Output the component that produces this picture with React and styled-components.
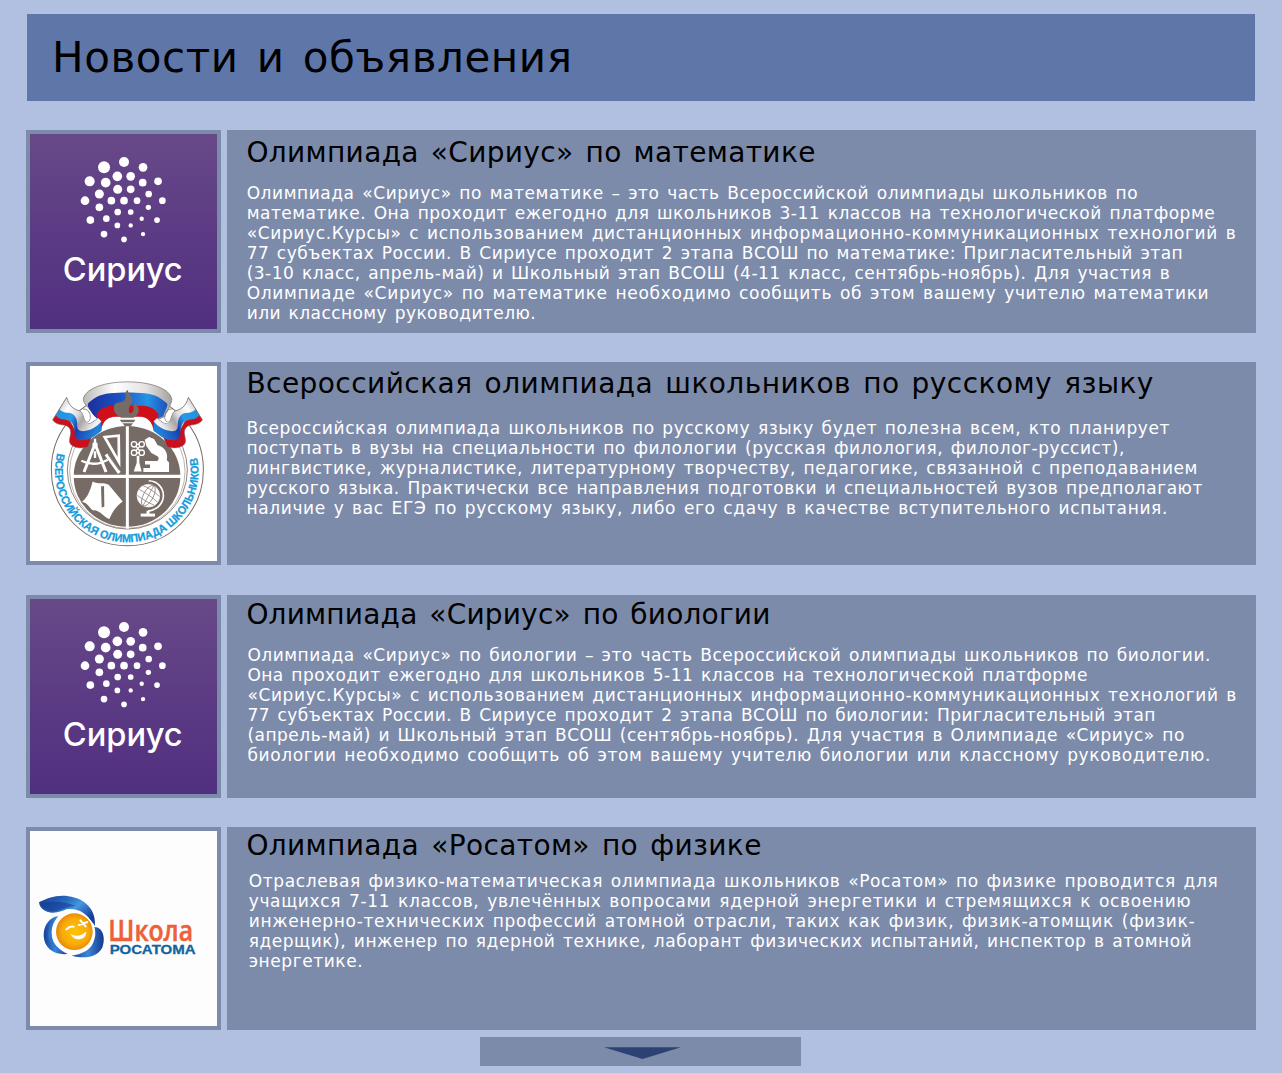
import React, { useLayoutEffect, useRef, useState } from "react";
import styled, { createGlobalStyle } from "styled-components";

const GlobalStyle = createGlobalStyle`
  * { box-sizing: border-box; }
  body {
    margin: 0;
    background: #b1c0e1;
    font-family: "DejaVu Sans", Inter, "Liberation Sans", sans-serif;
  }
`;

const Page = styled.main`
  display: flex;
  flex-direction: column;
  height: 1073px;
  padding: 14px 26px 0;
  overflow: hidden;
`;

const Header = styled.header`
  flex: none;
  height: 87px;
  margin: 0 1px;
  padding: 16px 25px 0;
  background: #5f76a9;
`;

const Title = styled.h1`
  margin: 0;
  font-size: 42px;
  line-height: 55px;
  font-weight: 400;
  color: #000;
`;

const NewsList = styled.section`
  display: flex;
  flex-direction: column;
  gap: 29.2px;
  margin-top: 29px;
`;

const NewsRow = styled.article`
  display: grid;
  grid-template-columns: 195.4px 1029.6px;
  column-gap: 5.2px;
  height: 203.1px;
`;

const Thumb = styled.div`
  display: flex;
  padding: 4px;
  background: #7d8bab;
`;

const Picture = styled.svg`
  display: block;
  width: 100%;
  height: 100%;
`;

const Card = styled.div`
  padding: ${(p) => p.$top}px 0 0 19.8px;
  background: #7d8bab;
`;

const CardTitle = styled.h2`
  margin: 0;
  font-size: 28px;
  line-height: 34px;
  font-weight: 400;
  color: #000;
`;

const CardText = styled.div`
  margin: ${(p) => p.$gap}px 0 0 ${(p) => p.$indent}px;
  font-size: 17px;
  line-height: 20.05px;
  color: #fff;
`;

const Line = styled.span`
  display: table;
  white-space: nowrap;
  word-spacing: 0.1em;
`;

const MoreButton = styled.button`
  flex: none;
  display: flex;
  align-items: center;
  justify-content: center;
  align-self: center;
  width: 321px;
  height: 29px;
  margin: 7.2px 1px 0 0;
  padding: 2px 0 0 3px;
  border: 0;
  background: #7d8bab;
`;

/* A single line whose tracking is adjusted so that it fills the given width. */
function FittedLine({ width, children }) {
  const ref = useRef(null);
  const [tracking, setTracking] = useState(0);
  useLayoutEffect(() => {
    const el = ref.current;
    el.style.letterSpacing = "0px";
    const natural = el.getBoundingClientRect().width;
    const value = (width - natural) / (children.length - 1);
    el.style.letterSpacing = `${value}px`;
    setTracking(value);
  }, [width, children]);
  return (
    <Line ref={ref} style={{ letterSpacing: `${tracking}px` }}>
      {children}
    </Line>
  );
}

const DOTS = [
  [312, 114, 15], [252, 130, 18], [369, 130, 13], [292, 157, 14.5], [332, 157, 13],
  [209, 172, 15], [257, 176, 14.5], [368, 176, 11.5], [414, 172, 11.5], [238, 210, 13.5],
  [293, 196, 13.5], [332, 196, 11.5], [386, 210, 10], [195, 230, 13], [274, 230, 11.5],
  [312, 230, 11.5], [351, 230, 10], [427, 230, 10], [238, 250, 11.5], [385, 250, 8],
  [293, 264, 10], [332, 264, 8.5], [211, 288, 11.5], [259, 284, 10], [365, 284, 6.5],
  [411, 288, 8.5], [292, 304, 8.5], [332, 304, 6.5], [252, 330, 10], [369, 330, 6.5],
  [312, 346, 8.5],
];

function SiriusLogo({ id }) {
  return (
    <Picture viewBox="30 30 562 585" preserveAspectRatio="none">
      <defs>
        <linearGradient id={id} x1="0" y1="0" x2="0" y2="1">
          <stop offset="0" stopColor="#684988" />
          <stop offset="0.5" stopColor="#5c3b84" />
          <stop offset="1" stopColor="#512f80" />
        </linearGradient>
      </defs>
      <rect x="30" y="30" width="562" height="585" fill={`url(#${id})`} />
      <g fill="#fff">
        {DOTS.map(([x, y, r]) => (
          <circle key={`${x}-${y}`} cx={x} cy={y} r={r} />
        ))}
        <text x="128" y="471" fontFamily="Inter, sans-serif" fontSize="97" fontWeight="500" textLength="360" lengthAdjust="spacingAndGlyphs">
          Сириус
        </text>
      </g>
    </Picture>
  );
}

function SideRibbon() {
  return (
    <g>
      <path d="M108 176 L98 192 C114 214 136 200 148 216 C160 232 140 254 153 266 C168 279 190 276 203 273 L214 245 L175 240 L150 195 Z" fill="#c9101c" stroke="#776b66" strokeWidth="1.5" />
      <path d="M119 156 L107 178 C124 200 146 182 158 204 C170 226 157 241 172 250 C190 257 213 248 224 240 L245 224 L243 196 L185 205 L165 175 Z" fill="url(#ribbonBlue)" />
      <path d="M140 124 L117 158 C136 180 156 160 168 186 C176 204 166 218 180 224 C198 230 230 216 244 196 L234 186 C222 200 210 206 199 200 C212 192 208 172 186 166 C160 160 148 152 140 124 Z" fill="url(#ribbonSilver)" />
      <path d="M98 192 L140 124 C148 152 160 159 180 165 C192 170 190 188 199 198 C209 198 212 188 210 176 C208 164 198 158 188 159" fill="none" stroke="#776b66" strokeWidth="2.5" />
      <path d="M181 165 C192 170 190 188 199 197 C208 197 210 187 208 177 C205 167 198 162 189 161 Z" fill="#fff" />
    </g>
  );
}

function OlympiadEmblem() {
  const gray = "#776b66";
  return (
    <Picture viewBox="30 30 562 585" preserveAspectRatio="none">
      <defs>
        <linearGradient id="ribbonBlue" x1="0" y1="0" x2="1" y2="0.3">
          <stop offset="0" stopColor="#1f8fe0" />
          <stop offset="0.4" stopColor="#2a9ae6" />
          <stop offset="0.6" stopColor="#1a3fae" />
          <stop offset="1" stopColor="#2180d6" />
        </linearGradient>
        <linearGradient id="archBlue" x1="0" y1="0" x2="1" y2="0">
          <stop offset="0" stopColor="#1b2f9c" />
          <stop offset="0.4" stopColor="#1c51c2" />
          <stop offset="0.75" stopColor="#2794e4" />
          <stop offset="1" stopColor="#1b52bd" />
        </linearGradient>
        <linearGradient id="ribbonSilver" x1="0" y1="0" x2="1" y2="0.5">
          <stop offset="0" stopColor="#b5b3b3" />
          <stop offset="0.3" stopColor="#ffffff" />
          <stop offset="0.55" stopColor="#dedcdc" />
          <stop offset="0.7" stopColor="#a9a5a4" />
          <stop offset="1" stopColor="#f2f1f1" />
        </linearGradient>
        <linearGradient id="archSilver" x1="0" y1="0" x2="1" y2="0">
          <stop offset="0" stopColor="#bbb8b8" />
          <stop offset="0.35" stopColor="#ffffff" />
          <stop offset="0.7" stopColor="#e4e2e2" />
          <stop offset="1" stopColor="#a5a1a1" />
        </linearGradient>
        <path id="sloganArc" d="M112 291 A215 214 0 1 0 530 298" />
      </defs>
      <rect x="30" y="30" width="562" height="585" fill="#fff" />
      <circle cx="322" cy="341" r="228" fill="#fff" stroke={gray} strokeWidth="3" />
      <ellipse cx="322" cy="342" rx="180" ry="177" fill="none" stroke={gray} strokeWidth="2.5" />
      <ellipse cx="322" cy="346" rx="173" ry="171" fill="none" stroke={gray} strokeWidth="1.5" />
      <ellipse cx="321" cy="361" rx="160" ry="151" fill={gray} />
      <path d="M155 361 H487" stroke="#fff" strokeWidth="10" />
      <path d="M322 200 V518" stroke="#fff" strokeWidth="9" />

      <text fill="#159bdc" stroke="#159bdc" strokeWidth="0.8" fontFamily='"Liberation Sans", Arial, sans-serif' fontSize="34" fontWeight="700">
        <textPath href="#sloganArc" textLength="768" lengthAdjust="spacingAndGlyphs">
          ВСЕРОССИЙСКАЯ ОЛИМПИАДА ШКОЛЬНИКОВ
        </textPath>
      </text>

      <g fill="none" stroke="#fff">
        <path d="M225 264 L192 348 M225 264 L258 348" strokeWidth="9" />
        <path d="M184 314 C208 326 237 326 263 311" strokeWidth="7" />
        <path d="M225 248 V268 M225 286 V306" strokeWidth="7" />
        <path d="M254 243 L296 239 L297 318 Z" strokeWidth="8" />
        <path d="M258 295 L298 351" strokeWidth="10" />
        <path d="M265 297 L297 343" stroke={gray} strokeWidth="2" />
        <circle cx="225" cy="266" r="8" fill="#fff" stroke="none" />
      </g>

      <g fill="none" stroke="#fff" strokeWidth="4">
        <circle cx="342" cy="265" r="8" />
        <circle cx="365" cy="265" r="8" />
        <circle cx="342" cy="290" r="8" />
        <circle cx="365" cy="290" r="8" />
        <path d="M347 270 L360 285 M360 270 L347 285 M349 265 H358 M349 290 H358" />
      </g>
      <path d="M350 299 H358 V320 L365 346 H341 L350 320 Z" fill="#fff" />
      <path d="M374 251 L387 243 L402 249 L413 268 C433 272 446 293 440 312 L447 319 V348 H370 V336 H390 V325 H375 V315 H411 C419 309 417 301 408 298 L394 291 L379 270 Z" fill="#fff" />

      <path d="M218 376 C236 386 250 377 266 386 L308 436 C292 448 278 464 268 489 C252 484 238 461 220 463 C209 459 206 441 186 437 C204 424 212 398 218 376 Z" fill="#fff" />
      <path d="M243 391 L252 390 L253 452 L245 454 Z" fill={gray} />

      <g fill="none" stroke="#fff">
        <circle cx="385" cy="419" r="34" fill="#fff" strokeWidth="2" />
        <path d="M386 374 C441 376 449 456 384 465" strokeWidth="5" />
        <path d="M384 464 V475" strokeWidth="9" />
        <path d="M362 477 H405" strokeWidth="9" />
        <g stroke={gray} strokeWidth="2">
          <ellipse cx="385" cy="419" rx="15" ry="34" transform="rotate(28 385 419)" />
          <path d="M401 389 L369 449 M357 400 C373 408 398 424 412 438 M352 418 C366 428 385 441 402 447 M369 389 C384 394 405 408 418 421" />
        </g>
      </g>

      <path d="M190 127 C208 61 437 61 455 127 C457 143 444 152 438 180 L401 196 C392 170 253 170 246 200 L218 173 C208 155 188 143 190 127 Z" fill="url(#archSilver)" stroke={gray} strokeWidth="2" />
      <path d="M203 144 C214 132 237 114 270 112 C302 109 343 109 373 112 C407 114 430 132 442 144 C442 158 433 164 430 181 L409 190 C395 147 247 147 232 189 L218 175 C214 164 203 158 203 144 Z" fill="url(#archBlue)" />
      <path d="M230 174 C240 158 256 150 274 149 H371 C389 150 405 158 415 174 L414 207 L400 221 C397 199 382 184 366 182 H280 C263 184 249 195 243 222 L232 200 Z" fill="#cf101b" />
      <SideRibbon />
      <g transform="translate(645 0) scale(-1 1)">
        <SideRibbon />
      </g>
      <path d="M303 185 C286 178 279 163 282 151 C286 132 313 146 317 127 C319 117 312 109 323 101 C322 111 342 121 336 139 C330 151 325 155 327 167 C329 177 344 169 340 153 C339 145 345 139 348 137 C348 151 361 157 354 171 C351 180 345 183 340 185 Z" fill={gray} />
      <path d="M299 191 H346 L341 199 H305 Z M307 202 H339 L332 211 H315 Z" fill={gray} />
    </Picture>
  );
}

function RosatomLogo() {
  return (
    <Picture viewBox="30 -147 562 585" preserveAspectRatio="none">
      <defs>
        <linearGradient id="wing" x1="0" y1="0" x2="1" y2="0.6">
          <stop offset="0" stopColor="#12398f" />
          <stop offset="0.45" stopColor="#2b6ec4" />
          <stop offset="0.65" stopColor="#4798e0" />
          <stop offset="1" stopColor="#153d99" />
        </linearGradient>
        <linearGradient id="lobe" x1="0" y1="0" x2="1" y2="0">
          <stop offset="0" stopColor="#173f9b" />
          <stop offset="0.5" stopColor="#3a87d6" />
          <stop offset="1" stopColor="#14378e" />
        </linearGradient>
        <radialGradient id="face" cx="0.52" cy="0.5" r="0.58">
          <stop offset="0" stopColor="#ffc400" />
          <stop offset="0.6" stopColor="#f8ac0a" />
          <stop offset="1" stopColor="#df7c08" />
        </radialGradient>
      </defs>
      <rect x="30" y="-147" width="562" height="585" fill="#fdfdfd" />
      <path d="M57 67 C80 56 112 43 145 49 C193 55 228 87 225 137 C217 127 210 118 205 112 C187 91 161 83 139 88 C122 96 98 104 75 92 C63 86 58 77 57 67 Z" fill="url(#wing)" />
      <path d="M62 69 C98 62 138 64 168 78 C150 78 130 86 110 93 C88 98 66 90 62 69 Z" fill="#13398c" opacity="0.55" />
      <path d="M114 109 C89 111 70 137 71 168 C73 204 101 226 143 222 C118 210 96 194 94 162 C94 143 101 124 114 109 Z" fill="url(#lobe)" />
      <path d="M114 109 C98 126 90 150 98 178 C104 196 120 210 143 222 C112 212 88 196 84 166 C84 142 96 120 114 109 Z" fill="#2f7bd0" opacity="0.7" />
      <path d="M223 141 C250 141 257 177 247 202 C233 229 201 238 155 227 C184 222 208 212 218 191 C227 173 228 158 223 141 Z" fill="url(#lobe)" />
      <circle cx="163" cy="155" r="59" fill="#fff" />
      <circle cx="163" cy="155" r="55" fill="url(#face)" />
      <g fill="none" stroke="#fff" strokeLinecap="round">
        <path d="M139 148 Q150 137 161 140" strokeWidth="6" />
        <path d="M181 121 L197 139 M177 135 L202 126" strokeWidth="6" />
      </g>
      <path d="M152 162 C168 172 187 166 198 154 C203 177 163 190 152 162 Z" fill="#fff" />
      <text x="265" y="182" fill="#ed6038" stroke="#ed6038" strokeWidth="1.5" fontFamily='"Open Sans", sans-serif' fontSize="84" fontWeight="600" textLength="254" lengthAdjust="spacingAndGlyphs">
        Школа
      </text>
      <text x="269" y="222" fill="#11649f" fontFamily='"Liberation Sans", Arial, sans-serif' fontSize="36" fontWeight="700" stroke="#11649f" strokeWidth="0.8" textLength="258" lengthAdjust="spacingAndGlyphs">
        РОСАТОМА
      </text>
    </Picture>
  );
}

const NEWS = [
  {
    id: "math",
    logo: <SiriusLogo id="siriusMath" />,
    top: 6,
    gap: 13,
    indent: 0.3,
    title: ["Олимпиада «Сириус» по математике", 569],
    lines: [
      ["Олимпиада «Сириус» по математике – это часть Всероссийской олимпиады школьников по", 891],
      ["математике. Она проходит ежегодно для школьников 3-11 классов на технологической платформе", 968],
      ["«Сириус.Курсы» с использованием дистанционных информационно-коммуникационных технологий в", 989],
      ["77 субъектах России. В Сириусе проходит 2 этапа ВСОШ по математике: Пригласительный этап", 936],
      ["(3-10 класс, апрель-май) и Школьный этап ВСОШ (4-11 класс, сентябрь-ноябрь). Для участия в", 923],
      ["Олимпиаде «Сириус» по математике необходимо сообщить об этом вашему учителю математики", 962],
      ["или классному руководителю.", 289],
    ],
  },
  {
    id: "russian",
    logo: <OlympiadEmblem />,
    top: 4.7,
    gap: 17.2,
    indent: 0,
    title: ["Всероссийская олимпиада школьников по русскому языку", 907],
    lines: [
      ["Всероссийская олимпиада школьников по русскому языку будет полезна всем, кто планирует", 923],
      ["поступать в вузы на специальности по филологии (русская филология, филолог-руссист),", 878],
      ["лингвистике, журналистике, литературному творчеству, педагогике, связанной с преподаванием", 951],
      ["русского языка. Практически все направления подготовки и специальностей вузов предполагают", 956],
      ["наличие у вас ЕГЭ по русскому языку, либо его сдачу в качестве вступительного испытания.", 921],
    ],
  },
  {
    id: "biology",
    logo: <SiriusLogo id="siriusBiology" />,
    top: 3.3,
    gap: 13,
    indent: 1,
    title: ["Олимпиада «Сириус» по биологии", 524],
    lines: [
      ["Олимпиада «Сириус» по биологии – это часть Всероссийской олимпиады школьников по биологии.", 963],
      ["Она проходит ежегодно для школьников 5-11 классов на технологической платформе", 840],
      ["«Сириус.Курсы» с использованием дистанционных информационно-коммуникационных технологий в", 989],
      ["77 субъектах России. В Сириусе проходит 2 этапа ВСОШ по биологии: Пригласительный этап", 908],
      ["(апрель-май) и Школьный этап ВСОШ (сентябрь-ноябрь). Для участия в Олимпиаде «Сириус» по", 937],
      ["биологии необходимо сообщить об этом вашему учителю биологии или классному руководителю.", 963],
    ],
  },
  {
    id: "physics",
    logo: <RosatomLogo />,
    top: 2,
    gap: 8.4,
    indent: 2.3,
    title: ["Олимпиада «Росатом» по физике", 515],
    lines: [
      ["Отраслевая физико-математическая олимпиада школьников «Росатом» по физике проводится для", 969],
      ["учащихся 7-11 классов, увлечённых вопросами ядерной энергетики и стремящихся к освоению", 942],
      ["инженерно-технических профессий атомной отрасли, таких как физик, физик-атомщик (физик-", 946],
      ["ядерщик), инженер по ядерной технике, лаборант физических испытаний, инспектор в атомной", 943],
      ["энергетике.", 114],
    ],
  },
];

export default function App() {
  return (
    <>
      <GlobalStyle />
      <Page>
        <Header>
          <Title>
            <FittedLine width={520}>Новости и объявления</FittedLine>
          </Title>
        </Header>
        <NewsList>
          {NEWS.map((item) => (
            <NewsRow key={item.id}>
              <Thumb>{item.logo}</Thumb>
              <Card $top={item.top}>
                <CardTitle>
                  <FittedLine width={item.title[1]}>{item.title[0]}</FittedLine>
                </CardTitle>
                <CardText $gap={item.gap} $indent={item.indent}>
                  {item.lines.map(([text, width]) => (
                    <FittedLine key={text} width={width}>
                      {text}
                    </FittedLine>
                  ))}
                </CardText>
              </Card>
            </NewsRow>
          ))}
        </NewsList>
        <MoreButton aria-label="Ещё">
          <svg width="77" height="12" viewBox="0 0 77 12">
            <path d="M0 0.3 H77 L38.5 12 Z" fill="#2c4174" />
          </svg>
        </MoreButton>
      </Page>
    </>
  );
}
